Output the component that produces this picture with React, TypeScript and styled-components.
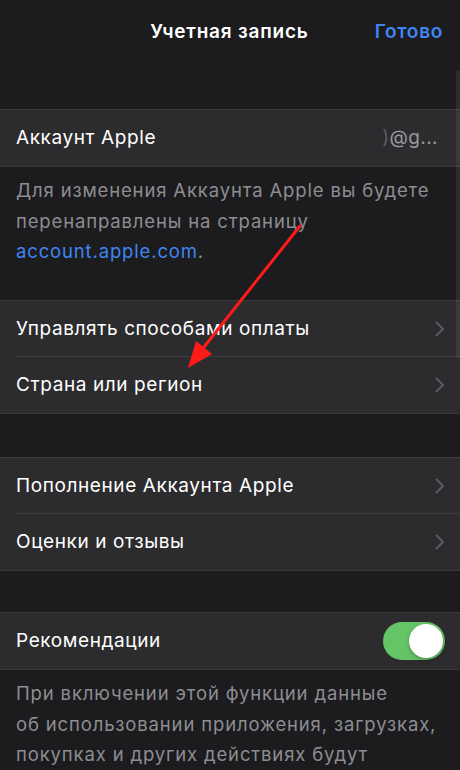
import React from "react";
import styled, { createGlobalStyle } from "styled-components";

const Global = createGlobalStyle`
  html, body { margin: 0; padding: 0; background: #1c1c1e; }
  body { width: 460px; height: 770px; overflow: hidden; font-family: Inter, "Noto Sans", sans-serif; -webkit-font-smoothing: antialiased; }
`;

const Screen = styled.div`
  position: relative;
  width: 460px;
  height: 770px;
  overflow: hidden;
  background: #1c1c1e;
  color: #fff;
  display: flex;
  flex-direction: column;
`;

const NavBar = styled.div`
  height: 62px;
  display: grid;
  grid-template-columns: 1fr auto 1fr;
  align-items: center;
  padding: 0 17px 0 16px;
`;

const Title = styled.div`
  grid-column: 2;
  font-size: 19px;
  font-weight: 600;
  letter-spacing: 0.8px;
  color: #fff;
`;

const Done = styled.div`
  justify-self: end;
  font-size: 19px;
  font-weight: 600;
  letter-spacing: 0.7px;
  color: #3f86f2;
`;

const Group = styled.div<{ $top: number }>`
  margin-top: ${(p) => p.$top}px;
  background: #2c2c2e;
  border-top: 1px solid #3a3a3c;
  border-bottom: 1px solid #38383a;
`;

const Row = styled.div<{ $sep?: boolean }>`
  position: relative;
  height: 56px;
  display: flex;
  align-items: center;
  padding: 0 15px 0 16px;
  &::after {
    content: "";
    display: ${(p) => (p.$sep ? "block" : "none")};
    position: absolute;
    left: 16px;
    right: 0;
    bottom: 0;
    height: 1px;
    background: #3d3d40;
  }
`;

const Label = styled.div`
  flex: 1;
  font-size: 19px;
  letter-spacing: 0.6px;
  color: #fff;
  margin-top: -2px;
`;

const Value = styled.div`
  font-size: 19px;
  letter-spacing: 0.4px;
  color: #98989d;
  margin-right: 7px;
  margin-top: -2px;
`;

const Faded = styled.span`
  opacity: 0.45;
`;

const Footer = styled.div<{ $h?: number }>`
  box-sizing: border-box;
  ${(p) => (p.$h ? `height: ${p.$h}px;` : "")}
  padding: 8px 16px 0 16px;
  font-size: 18.5px;
  line-height: 30.5px;
  letter-spacing: 0.85px;
  color: #8d8d92;
`;

const Link = styled.span`
  color: #3f86f2;
`;

const Chevron = () => (
  <svg width="10" height="16" viewBox="0 0 10 16">
    <path d="M1.5 1.5 L8 8 L1.5 14.5" fill="none" stroke="#5b5b60" strokeWidth="2" strokeLinecap="round" strokeLinejoin="round" />
  </svg>
);

const Toggle = styled.div`
  width: 62px;
  height: 38px;
  border-radius: 19px;
  background: #65c466;
  position: relative;
  &::after {
    content: "";
    position: absolute;
    right: 2px;
    top: 2px;
    width: 34px;
    height: 34px;
    border-radius: 50%;
    background: #fff;
    box-shadow: 0 2px 4px rgba(0, 0, 0, 0.25);
  }
`;

const ScrollIndicator = styled.div`
  position: absolute;
  right: 0;
  top: 70px;
  width: 4px;
  height: 288px;
  border-radius: 2px;
  background: rgba(255, 255, 255, 0.07);
`;

const ArrowLayer = styled.svg`
  position: absolute;
  left: 0;
  top: 0;
  pointer-events: none;
`;

export default function App() {
  return (
    <Screen>
      <Global />
      <NavBar>
        <Title>Учетная запись</Title>
        <Done>Готово</Done>
      </NavBar>

      <Group $top={47}>
        <Row>
          <Label>Аккаунт Apple</Label>
          <Value>
            <Faded>)</Faded>@g...
          </Value>
        </Row>
      </Group>
      <Footer $h={133}>
        Для изменения Аккаунта Apple вы будете перенаправлены на страницу{" "}
        <Link>account.apple.com</Link>.
      </Footer>

      <Group $top={0}>
        <Row $sep>
          <Label>Управлять способами оплаты</Label>
          <Chevron />
        </Row>
        <Row>
          <Label>Страна или регион</Label>
          <Chevron />
        </Row>
      </Group>

      <Group $top={43}>
        <Row $sep>
          <Label>Пополнение Аккаунта Apple</Label>
          <Chevron />
        </Row>
        <Row>
          <Label>Оценки и отзывы</Label>
          <Chevron />
        </Row>
      </Group>

      <Group $top={41}>
        <Row>
          <Label>Рекомендации</Label>
          <Toggle />
        </Row>
      </Group>
      <Footer>
        При включении этой функции данные
        <br />
        об использовании приложения, загрузках, покупках и других действиях будут
      </Footer>

      <ScrollIndicator />
      <ArrowLayer width="460" height="770" viewBox="0 0 460 770">
        <line x1="300" y1="226" x2="200" y2="352" stroke="#ff1a1a" strokeWidth="3" strokeLinecap="round" />
        <polygon points="188,368 196,341 212,354" fill="#ff1a1a" />
      </ArrowLayer>
    </Screen>
  );
}
